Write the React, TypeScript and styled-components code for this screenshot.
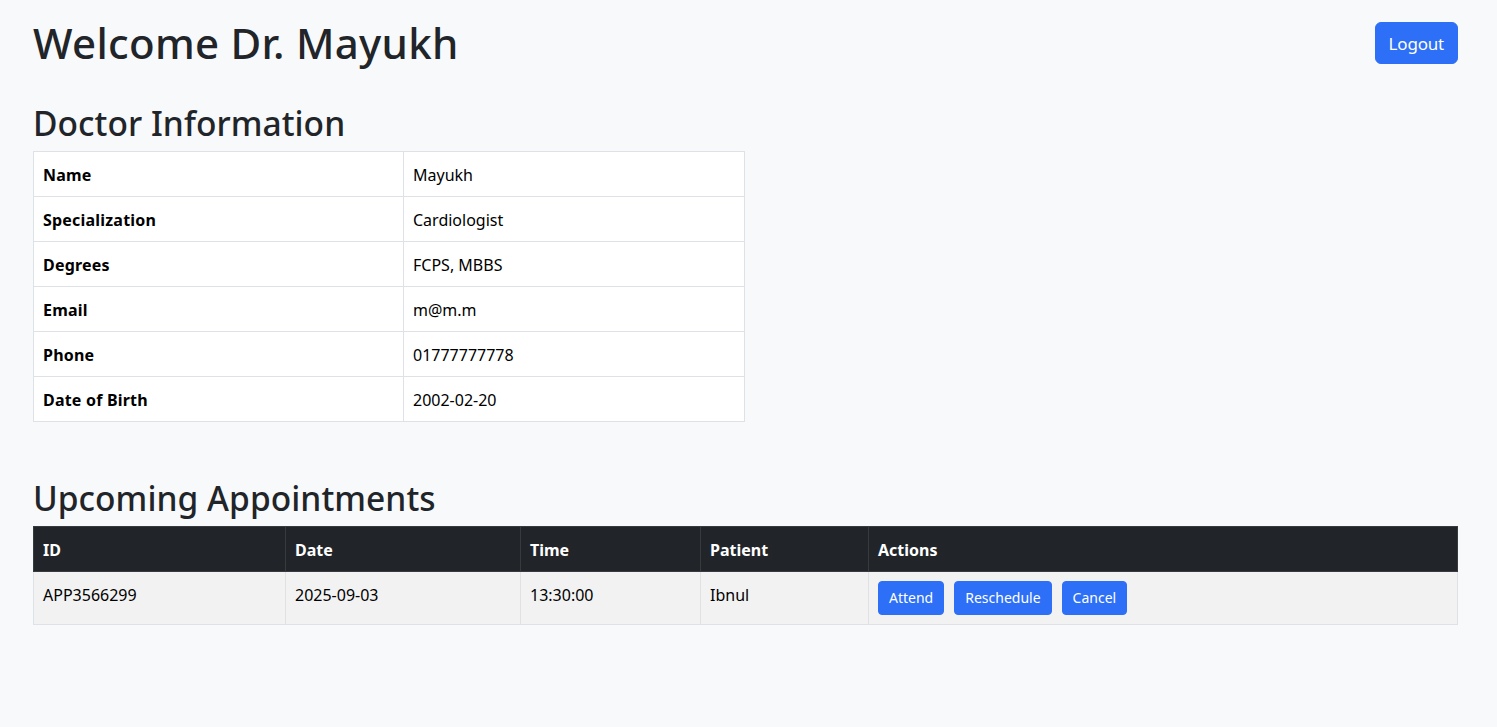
import React from "react";
import styled, { createGlobalStyle } from "styled-components";

const Global = createGlobalStyle`
  html, body { margin: 0; padding: 0; background: #f8f9fa; }
  body {
    font-family: "Noto Sans", "Open Sans", sans-serif;
    color: #212529;
    font-size: 16px;
    line-height: 1.5;
  }
  * { box-sizing: border-box; }
`;

const Page = styled.div`
  padding: 19px 39px 40px 33px;
`;

const Header = styled.header`
  display: flex;
  justify-content: space-between;
  align-items: center;
`;

const Title = styled.h1`
  margin: 0;
  font-size: 42px;
  font-weight: 500;
  line-height: 48px;
  letter-spacing: 0.3px;
`;

const SectionTitle = styled.h2<{ $top: number }>`
  margin: ${(p) => p.$top}px 0 9px;
  font-size: 33.5px;
  font-weight: 500;
  line-height: 38px;
  letter-spacing: 0.05px;
`;

const Button = styled.button<{ $size?: "sm" | "md" }>`
  background: #2d6ff6;
  color: #fff;
  border: 1px solid #2d6ff6;
  font-family: inherit;
  font-size: ${(p) => (p.$size === "sm" ? "14px" : "17px")};
  letter-spacing: ${(p) => (p.$size === "sm" ? "0" : "-0.2px")};
  height: ${(p) => (p.$size === "sm" ? "34px" : "42px")};
  padding: ${(p) => (p.$size === "sm" ? "0 10px" : "0 13px")};
  border-radius: ${(p) => (p.$size === "sm" ? "4px" : "6px")};
  cursor: pointer;
  line-height: 1;
`;

const InfoTable = styled.table`
  width: 712px;
  border-collapse: collapse;
  background: #fff;
  color: #000;
`;

const Cell = styled.td<{ $bold?: boolean; $w?: number }>`
  border: 1px solid #dee2e6;
  padding: 11px 9px 9px;
  height: 45px;
  line-height: 24px;
  font-weight: ${(p) => (p.$bold ? 700 : 400)};
  width: ${(p) => (p.$w ? `${p.$w}px` : "auto")};
  letter-spacing: ${(p) => (p.$bold ? "0.2px" : "0")};
  vertical-align: top;
`;

const ApptTable = styled.table`
  width: 100%;
  border-collapse: collapse;
  color: #000;
`;

const HeadCell = styled.th<{ $w?: number }>`
  background: #212529;
  color: #fff;
  border: 1px solid #373b3e;
  text-align: left;
  font-weight: 700;
  padding: 11px 9px 9px;
  height: 45px;
  line-height: 24px;
  width: ${(p) => (p.$w ? `${p.$w}px` : "auto")};
`;

const BodyCell = styled.td`
  background: #f2f2f2;
  border: 1px solid #dee2e6;
  padding: 11px 9px 8px;
  height: 53px;
  line-height: 24px;
  vertical-align: top;
`;

const Actions = styled.div`
  display: flex;
  gap: 10px;
  margin-top: -2px;
`;

const info: [string, string][] = [
  ["Name", "Mayukh"],
  ["Specialization", "Cardiologist"],
  ["Degrees", "FCPS, MBBS"],
  ["Email", "m@m.m"],
  ["Phone", "01777777778"],
  ["Date of Birth", "2002-02-20"],
];

export default function App() {
  return (
    <>
      <Global />
      <Page>
        <Header>
          <Title>Welcome Dr. Mayukh</Title>
          <Button>Logout</Button>
        </Header>

        <SectionTitle $top={37}>Doctor Information</SectionTitle>
        <InfoTable>
          <tbody>
            {info.map(([k, v]) => (
              <tr key={k}>
                <Cell $bold $w={370}>{k}</Cell>
                <Cell>{v}</Cell>
              </tr>
            ))}
          </tbody>
        </InfoTable>

        <SectionTitle $top={57}>Upcoming Appointments</SectionTitle>
        <ApptTable>
          <thead>
            <tr>
              <HeadCell $w={252}>ID</HeadCell>
              <HeadCell $w={235}>Date</HeadCell>
              <HeadCell $w={180}>Time</HeadCell>
              <HeadCell $w={168}>Patient</HeadCell>
              <HeadCell>Actions</HeadCell>
            </tr>
          </thead>
          <tbody>
            <tr>
              <BodyCell>APP3566299</BodyCell>
              <BodyCell>2025-09-03</BodyCell>
              <BodyCell>13:30:00</BodyCell>
              <BodyCell>Ibnul</BodyCell>
              <BodyCell>
                <Actions>
                  <Button $size="sm">Attend</Button>
                  <Button $size="sm">Reschedule</Button>
                  <Button $size="sm">Cancel</Button>
                </Actions>
              </BodyCell>
            </tr>
          </tbody>
        </ApptTable>
      </Page>
    </>
  );
}
